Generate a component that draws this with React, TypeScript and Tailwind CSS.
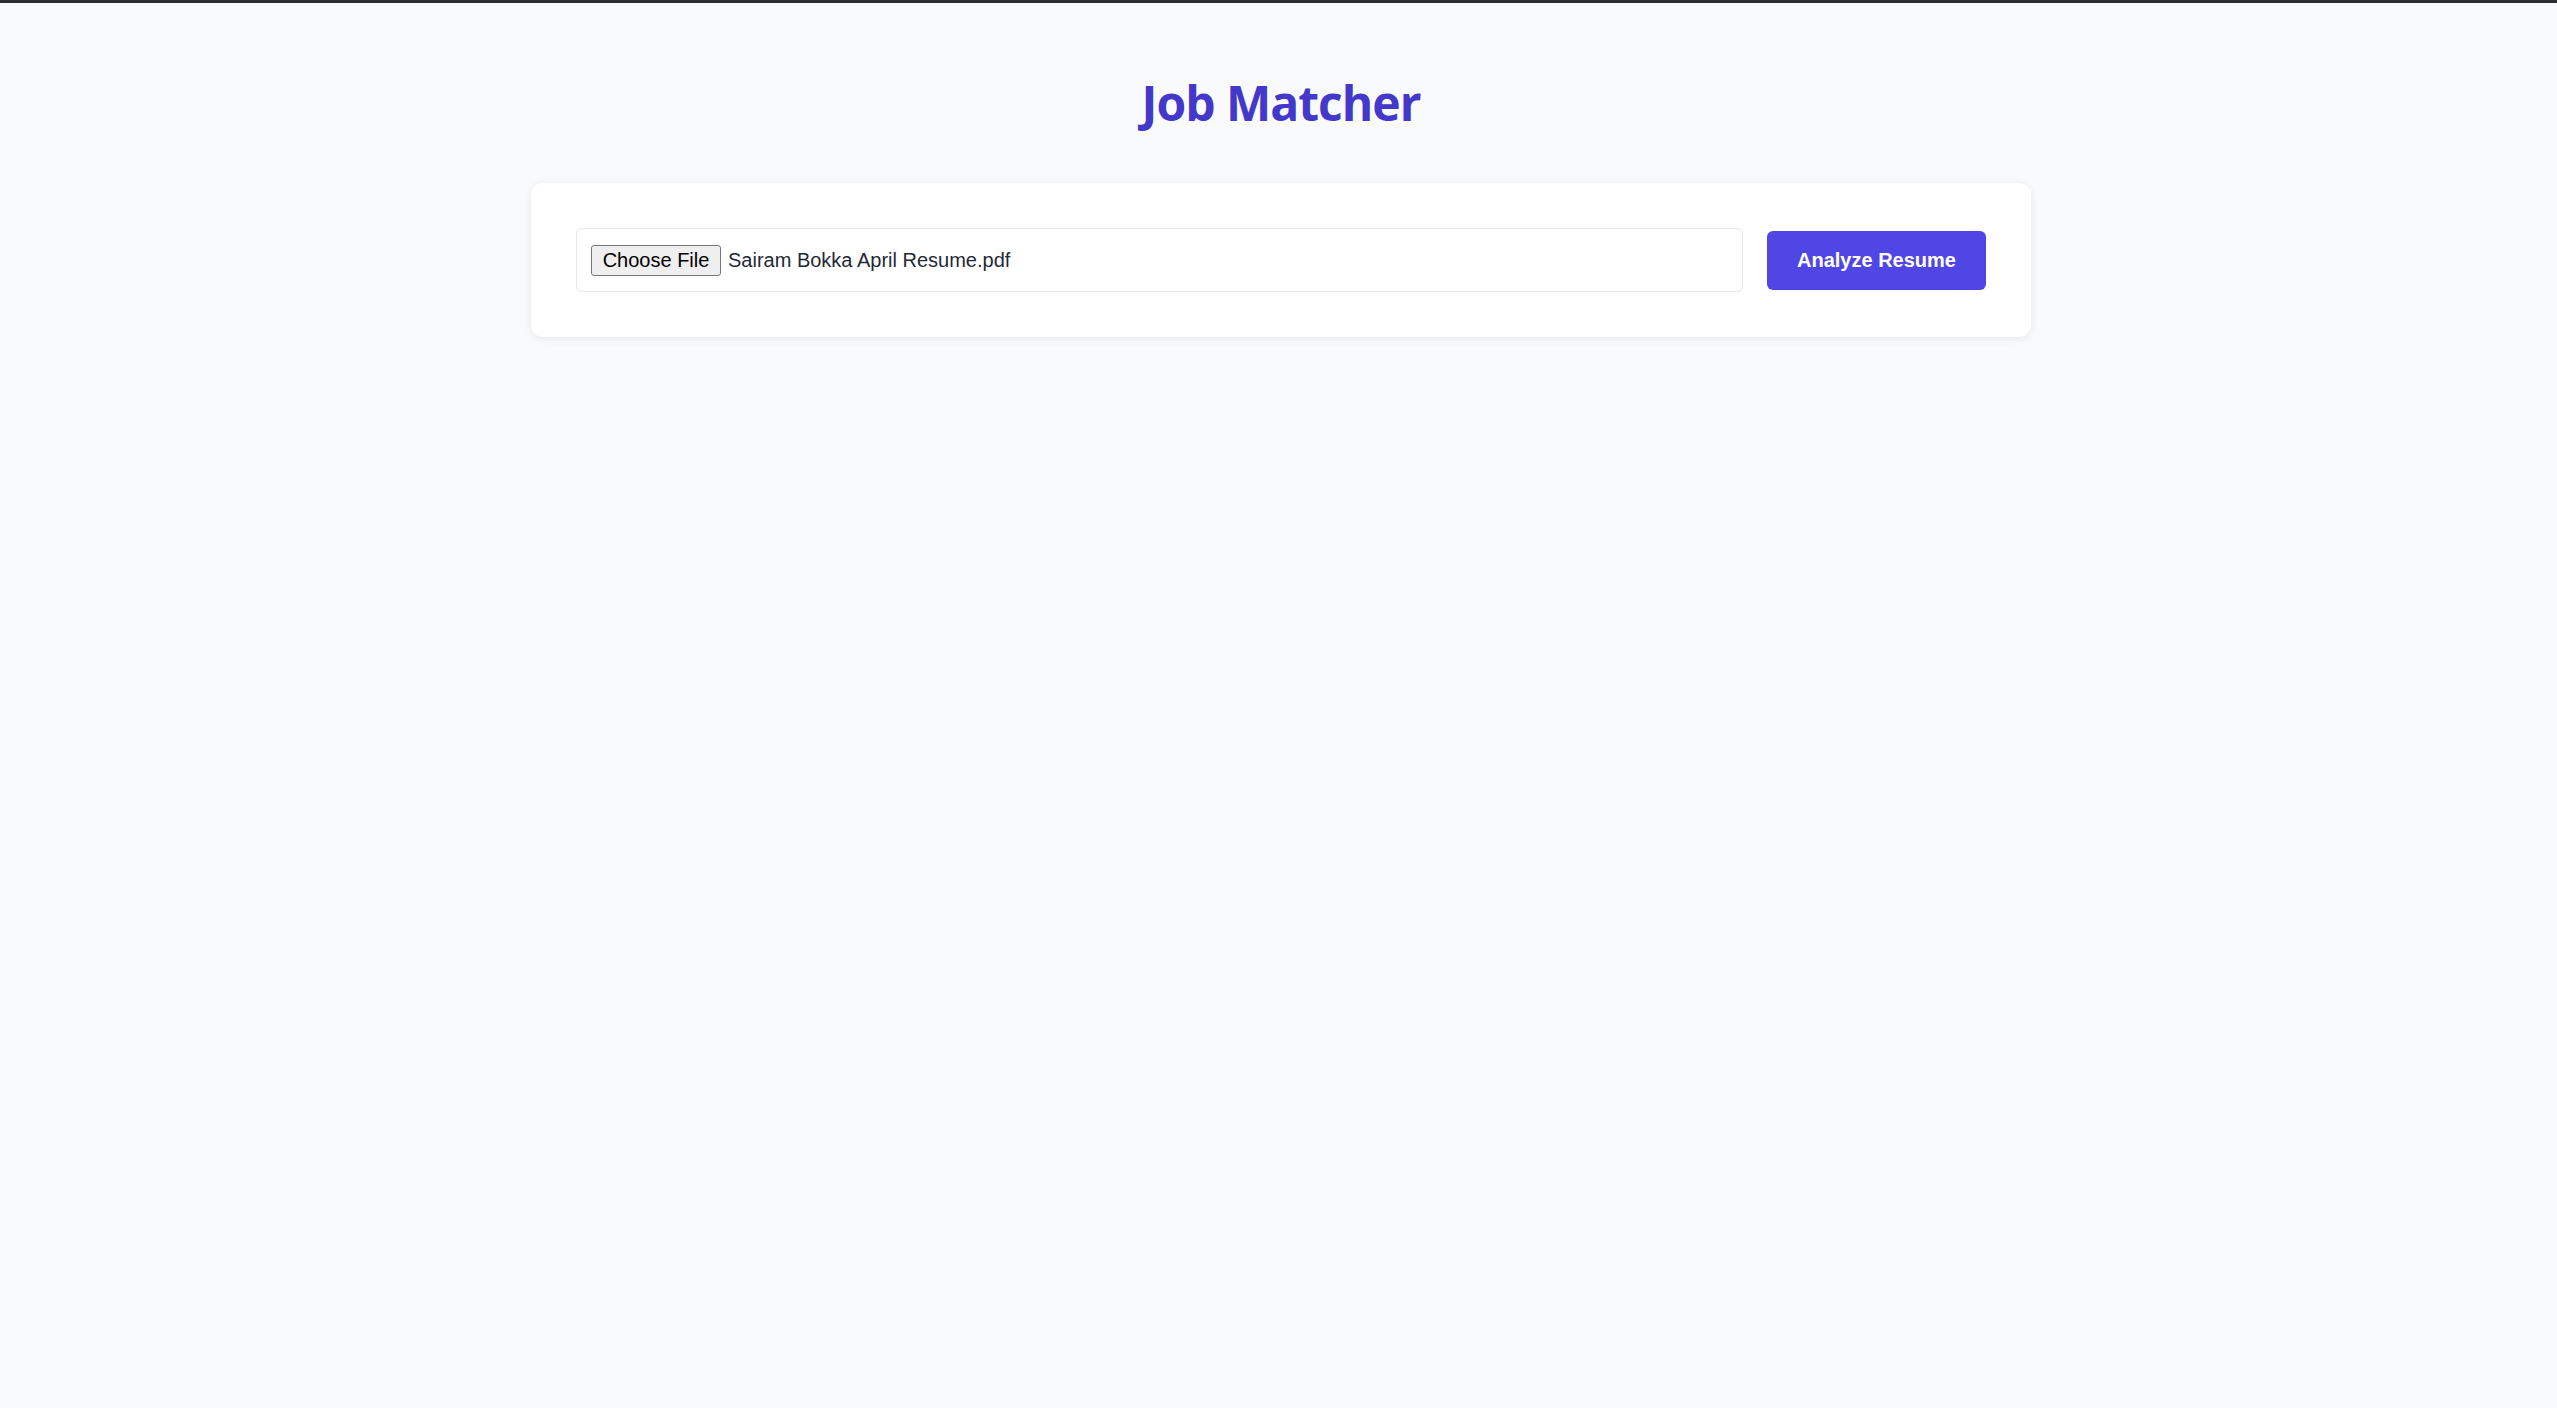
import React from "react";

const App = () => {
  return (
    <div className="min-h-screen w-full bg-[#f9fafb] border-t-[3px] border-[#2e2e2e]">
      <div className="flex flex-col items-center pt-[68px] pl-[5px]">
        <h1 className="text-[48px] leading-[64px] font-bold text-[#4338ca] [font-family:'Open_Sans',sans-serif] tracking-[-1px]">
          Job Matcher
        </h1>

        {/* Upload card */}
        <div className="mt-[48px] w-[1500px] bg-white rounded-[12px] shadow-[0_2px_8px_rgba(0,0,0,0.08)] px-[45px] py-[45px] flex items-center gap-6">
          <div className="flex-1 h-[64px] border border-[#e5e7eb] rounded-[6px] flex items-center pl-[14px] gap-[7px]">
            <span className="h-[31px] w-[130px] flex items-center justify-center bg-[#efefef] border border-[#767676] rounded-[3px] text-[20px] text-black [font-family:'Liberation_Sans',Arial,sans-serif]">
              Choose File
            </span>
            <span className="text-[20px] text-[#1f2937] [font-family:'Liberation_Sans',Arial,sans-serif]">
              Sairam Bokka April Resume.pdf
            </span>
          </div>
          <button className="h-[59px] w-[219px] bg-[#4f46e5] rounded-[6px] text-white font-bold text-[20px] [font-family:'Liberation_Sans',Arial,sans-serif]">
            Analyze Resume
          </button>
        </div>
      </div>
    </div>
  );
};

export default App;
